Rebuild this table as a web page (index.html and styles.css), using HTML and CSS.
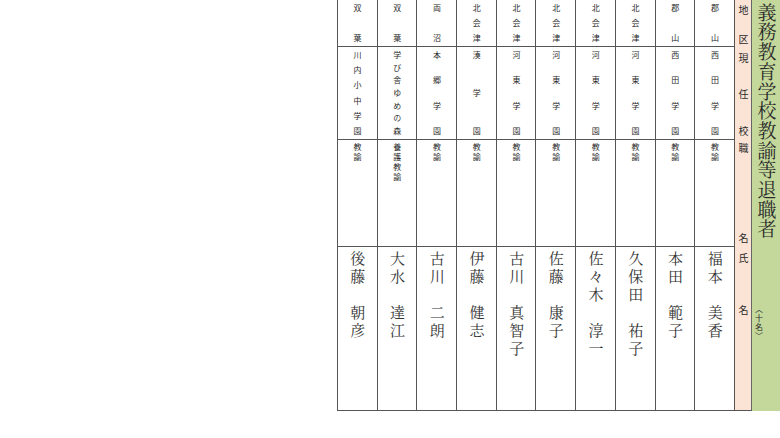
FILE: index.html
```html
<!DOCTYPE html>
<html lang="ja">
<head>
<meta charset="utf-8">
<title>義務教育学校教諭等退職者</title>
<link rel="stylesheet" href="styles.css">
</head>
<body>
<div class="page">
  <div class="sheet">
    <div class="title">
      <span class="title-main">義務教育学校教諭等退職者</span>
      <span class="count">〈十名〉</span>
    </div>
    <div class="labels">
      <div class="lab lab-region"><span class="v">地区</span></div>
      <div class="lab lab-school"><span class="v">現任校</span></div>
      <div class="lab lab-pos"><span class="v">職名</span></div>
      <div class="lab lab-name"><span class="v">氏名</span></div>
    </div>
    <div class="cols">
      <div class="col">
        <div class="cell region"><span class="v">郡山</span></div>
        <div class="cell school"><span class="v">西田学園</span></div>
        <div class="cell pos"><span class="v">教諭</span></div>
        <div class="cell name"><span class="v">福本　美香</span></div>
      </div>
      <div class="col">
        <div class="cell region"><span class="v">郡山</span></div>
        <div class="cell school"><span class="v">西田学園</span></div>
        <div class="cell pos"><span class="v">教諭</span></div>
        <div class="cell name"><span class="v">本田　範子</span></div>
      </div>
      <div class="col">
        <div class="cell region"><span class="v">北会津</span></div>
        <div class="cell school"><span class="v">河東学園</span></div>
        <div class="cell pos"><span class="v">教諭</span></div>
        <div class="cell name"><span class="v">久保田　祐子</span></div>
      </div>
      <div class="col">
        <div class="cell region"><span class="v">北会津</span></div>
        <div class="cell school"><span class="v">河東学園</span></div>
        <div class="cell pos"><span class="v">教諭</span></div>
        <div class="cell name"><span class="v">佐々木　淳一</span></div>
      </div>
      <div class="col">
        <div class="cell region"><span class="v">北会津</span></div>
        <div class="cell school"><span class="v">河東学園</span></div>
        <div class="cell pos"><span class="v">教諭</span></div>
        <div class="cell name"><span class="v">佐藤　康子</span></div>
      </div>
      <div class="col">
        <div class="cell region"><span class="v">北会津</span></div>
        <div class="cell school"><span class="v">河東学園</span></div>
        <div class="cell pos"><span class="v">教諭</span></div>
        <div class="cell name"><span class="v">古川　真智子</span></div>
      </div>
      <div class="col">
        <div class="cell region"><span class="v">北会津</span></div>
        <div class="cell school"><span class="v">湊学園</span></div>
        <div class="cell pos"><span class="v">教諭</span></div>
        <div class="cell name"><span class="v">伊藤　健志</span></div>
      </div>
      <div class="col">
        <div class="cell region"><span class="v">両沼</span></div>
        <div class="cell school"><span class="v">本郷学園</span></div>
        <div class="cell pos"><span class="v">教諭</span></div>
        <div class="cell name"><span class="v">古川　二朗</span></div>
      </div>
      <div class="col">
        <div class="cell region"><span class="v">双葉</span></div>
        <div class="cell school"><span class="v">学び舎ゆめの森</span></div>
        <div class="cell pos"><span class="v">養護教諭</span></div>
        <div class="cell name"><span class="v">大水　達江</span></div>
      </div>
      <div class="col">
        <div class="cell region"><span class="v">双葉</span></div>
        <div class="cell school"><span class="v">川内小中学園</span></div>
        <div class="cell pos"><span class="v">教諭</span></div>
        <div class="cell name"><span class="v">後藤　朝彦</span></div>
      </div>
    </div>
  </div>
</div>
</body>
</html>
```
FILE: styles.css
```css
* { box-sizing: border-box; margin: 0; padding: 0; }
html, body { width: 780px; height: 438px; background: #fff; overflow: hidden; }
body { font-family: "Noto Sans CJK JP", sans-serif; color: #2a2a2a; }

.page { display: flex; justify-content: flex-end; width: 780px; }
.sheet { display: flex; flex-direction: row-reverse; align-items: flex-start; height: 411px; }

.v { writing-mode: vertical-rl; line-height: 1.2; }

/* green title column */
.title {
  width: 28px; height: 411px; background: #c4d89c;
  display: flex; flex-direction: column; align-items: center;
}
.title-main {
  writing-mode: vertical-rl;
  font-family: "Noto Serif CJK JP", "IPAMincho", "Noto Sans CJK JP", serif;
  font-size: 19px; letter-spacing: 0.7px; line-height: 1.1;
  padding-top: 3px; color: #2a2a2a;
}
.count {
  writing-mode: vertical-rl; font-size: 8px; letter-spacing: 1px; line-height: 1.1;
  margin-top: 66px; margin-right: 16px;
}

/* peach label column */
.labels {
  width: 17px; height: 411px; background: #fbe4d6;
  border-right: 1px solid #666; border-bottom: 1px solid #555;
  display: flex; flex-direction: column;
}
.lab { display: flex; justify-content: center; font-size: 10px; }
.lab .v { text-align: justify; text-align-last: justify; height: 100%; }
.lab-region { height: 47px; padding: 5px 0 3px; }
.lab-school { height: 93px; padding: 6px 0 4px; }
.lab-pos { height: 107px; padding: 3px 0 4px; }
.lab-name { height: 163px; padding: 6px 0 95px; }

/* data columns */
.cols {
  width: 398px; display: flex; flex-direction: row-reverse;
  border-left: 1px solid #555;
}
.col { flex: 1; border-right: 1px solid #555; display: flex; flex-direction: column; }
.cell { display: flex; justify-content: center; border-bottom: 1px solid #555; font-size: 8px; }
.cell .v { height: 100%; }
.region { height: 47px; padding: 4px 0; }
.region .v, .school .v { text-align: justify; text-align-last: justify; }
.school { height: 93px; padding: 4px 0; }
.pos { height: 107px; padding: 3px 0; }
.pos .v { letter-spacing: 2px; }
.name { height: 164px; padding-top: 4px; }
.name .v {
  font-family: "Noto Serif CJK JP", "IPAMincho", "Noto Sans CJK JP", serif;
  font-size: 15px; letter-spacing: 3px; line-height: 1.2; color: #333;
}
```
